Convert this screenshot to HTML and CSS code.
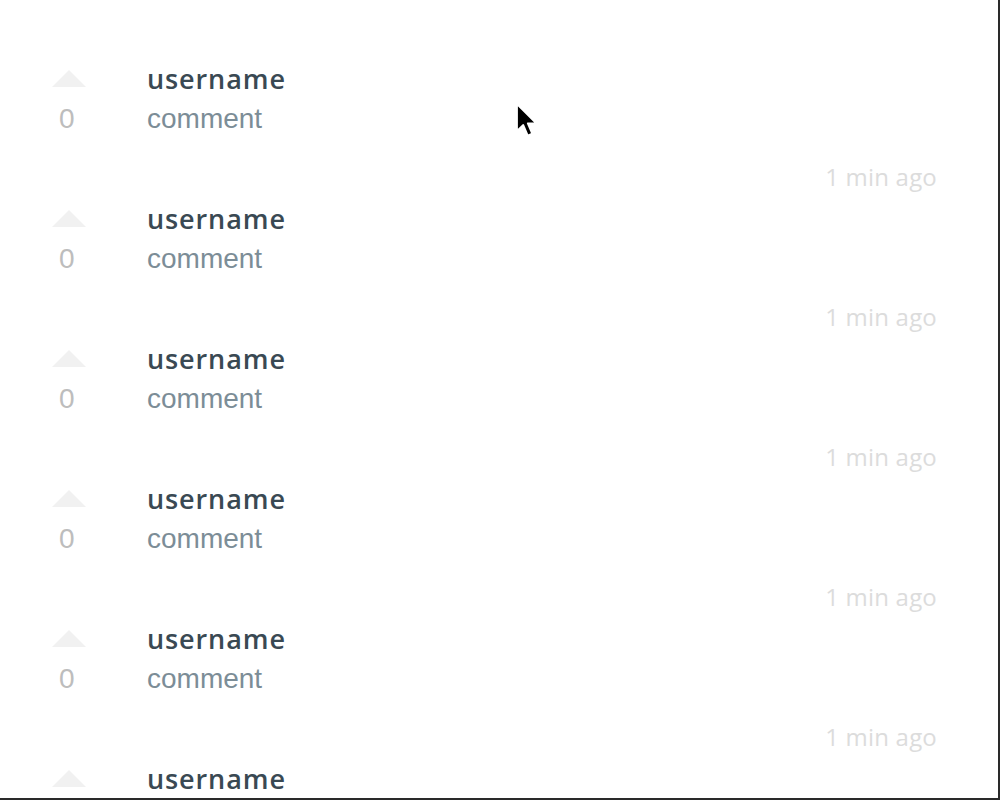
FILE: index.html
```html
<!DOCTYPE html>
<html>
<head>
<meta charset="utf-8">
<link rel="stylesheet" href="styles.css">
</head>
<body>
<div class="page">
  <ul class="comments">
    <li class="comment">
      <div class="vote"><span class="up"></span><span class="score">0</span></div>
      <div class="body"><div class="username">username</div><div class="text">comment</div></div>
      <div class="time">1 min ago</div>
    </li>
    <li class="comment">
      <div class="vote"><span class="up"></span><span class="score">0</span></div>
      <div class="body"><div class="username">username</div><div class="text">comment</div></div>
      <div class="time">1 min ago</div>
    </li>
    <li class="comment">
      <div class="vote"><span class="up"></span><span class="score">0</span></div>
      <div class="body"><div class="username">username</div><div class="text">comment</div></div>
      <div class="time">1 min ago</div>
    </li>
    <li class="comment">
      <div class="vote"><span class="up"></span><span class="score">0</span></div>
      <div class="body"><div class="username">username</div><div class="text">comment</div></div>
      <div class="time">1 min ago</div>
    </li>
    <li class="comment">
      <div class="vote"><span class="up"></span><span class="score">0</span></div>
      <div class="body"><div class="username">username</div><div class="text">comment</div></div>
      <div class="time">1 min ago</div>
    </li>
    <li class="comment">
      <div class="vote"><span class="up"></span><span class="score">0</span></div>
      <div class="body"><div class="username">username</div><div class="text">comment</div></div>
      <div class="time">1 min ago</div>
    </li>
  </ul>
  <svg class="cursor" width="26" height="38" viewBox="0 0 26 38">
    <path d="M2 2 L2 29 L8.3 23 L12.8 33.5 L17.2 31.6 L12.8 21.3 L21.3 21.3 Z" fill="#000" stroke="#fff" stroke-width="1.8" stroke-linejoin="round"/>
  </svg>
</div>
</body>
</html>
```
FILE: styles.css
```css
html, body {
  margin: 0;
  padding: 0;
  background: #fff;
}
.page {
  position: relative;
  width: 1000px;
  height: 800px;
  box-sizing: border-box;
  border-right: 2px solid #2a2a2a;
  border-bottom: 2px solid #2a2a2a;
  overflow: hidden;
  background: #fff;
}
.comments {
  list-style: none;
  margin: 0;
  padding: 59px 61px 0 52px;
}
.comment {
  display: grid;
  grid-template-columns: 95px 1fr;
}
.vote {
  display: flex;
  flex-direction: column;
}
.up {
  display: block;
  width: 0;
  height: 0;
  margin-top: 11px;
  border-left: 17px solid transparent;
  border-right: 17px solid transparent;
  border-bottom: 17px solid #f1f1f1;
  margin-bottom: 12px;
}
.score {
  font-family: "Liberation Sans", Arial, sans-serif;
  font-size: 28px;
  line-height: 40px;
  color: #bdbdbd;
  padding-left: 7px;
}
.username {
  font-family: "Open Sans", sans-serif;
  font-weight: 600;
  font-size: 27px;
  letter-spacing: 0.9px;
  line-height: 40px;
  color: #3a4953;
}
.text {
  font-family: "Liberation Sans", Arial, sans-serif;
  font-size: 28px;
  line-height: 40px;
  color: #7c8d97;
}
.time {
  grid-column: 1 / -1;
  text-align: right;
  margin-top: 18px;
  margin-bottom: 2px;
  font-family: "Open Sans", sans-serif;
  font-size: 24px;
  letter-spacing: 0.2px;
  line-height: 40px;
  color: #dcdcdc;
}
.cursor {
  position: absolute;
  left: 515px;
  top: 102px;
}
```
